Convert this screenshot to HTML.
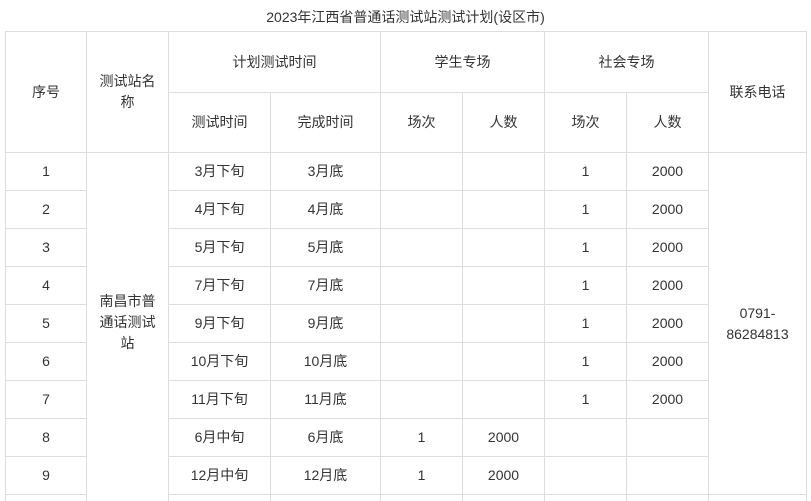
<!DOCTYPE html>
<html><head><meta charset="utf-8"><style>
html,body{margin:0;width:811px;height:501px;overflow:hidden}
body{background:#fff;font-family:"Liberation Sans","Noto Sans CJK SC",sans-serif;color:#333;font-size:14px;position:relative}
.c{position:absolute;border:1px solid #ddd;display:flex;align-items:center;justify-content:center;text-align:center;line-height:21px;box-sizing:border-box}
.t{position:absolute;left:0;width:811px;top:7px;text-align:center;font-size:14px}
</style></head><body>
<div class="t">2023年江西省普通话测试站测试计划(设区市)</div>
<div id="g"></div>
<script>
var X=[5,86,168,270,380,462,544,626,708,806];
var g=document.getElementById('g'),h='';
function c(c0,c1,y0,y1,txt,st){h+='<div class="c" style="left:'+X[c0]+'px;top:'+y0+'px;width:'+(X[c1]-X[c0]+1)+'px;height:'+(y1-y0+1)+'px;'+(st||'')+'">'+txt+'</div>';}
c(0,1,31,152,'序号');
c(1,2,31,152,'测试站名<br>称','align-items:flex-start;padding-top:39px');
c(2,4,31,92,'计划测试时间');
c(4,6,31,92,'学生专场');
c(6,8,31,92,'社会专场');
c(8,9,31,152,'联系电话');
var s=['测试时间','完成时间','场次','人数','场次','人数'];
for(var i=0;i<6;i++)c(2+i,3+i,92,152,s[i]);
var d=[['3月下旬','3月底','','','1','2000'],['4月下旬','4月底','','','1','2000'],['5月下旬','5月底','','','1','2000'],['7月下旬','7月底','','','1','2000'],['9月下旬','9月底','','','1','2000'],['10月下旬','10月底','','','1','2000'],['11月下旬','11月底','','','1','2000'],['6月中旬','6月底','1','2000','',''],['12月中旬','12月底','1','2000','',''],['','','','','','']];
for(var r=0;r<10;r++){var y=152+r*38;var y1=Math.min(y+38,510);c(0,1,y,y1,r<9?r+1:'');for(var i=0;i<6;i++)c(2+i,3+i,y,y1,d[r][i]);}
c(1,2,152,510,'南昌市普<br>通话测试<br>站','align-items:flex-start;padding-top:138px');
c(8,9,152,494,'0791-<br>86284813');
c(8,9,494,510,'');
g.innerHTML=h;
</script>
</body></html>
